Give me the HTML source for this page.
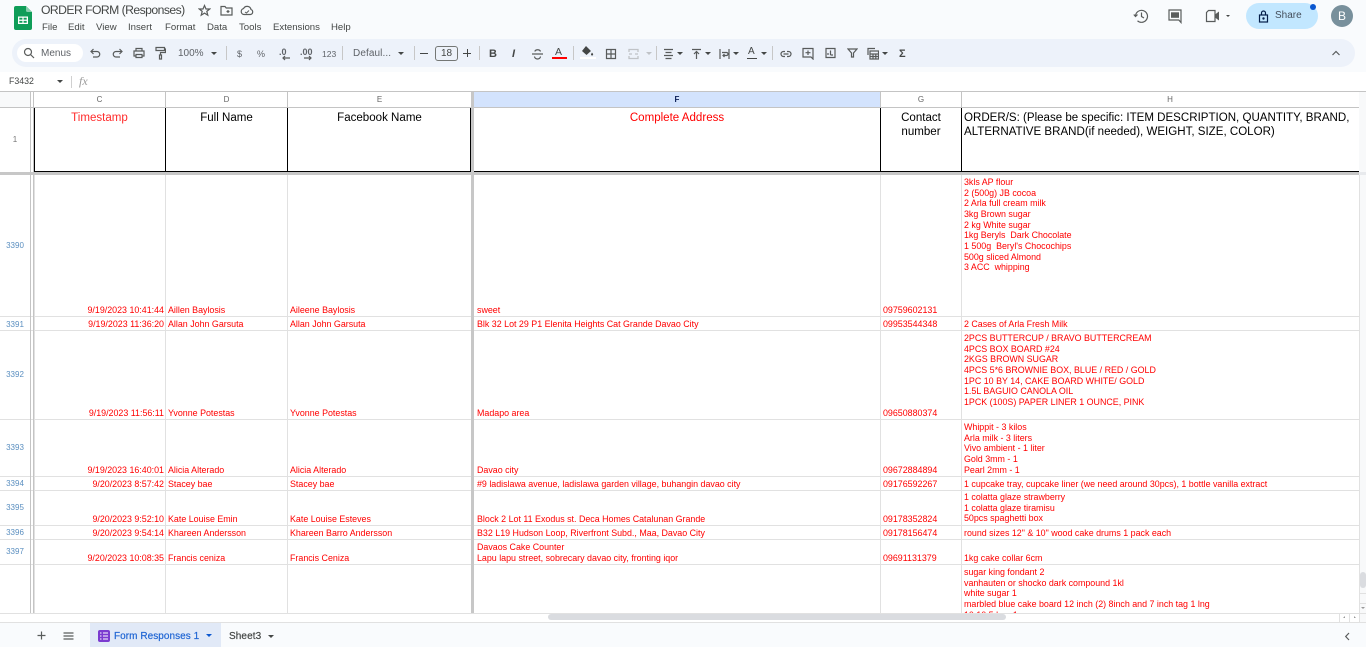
<!DOCTYPE html>
<html><head><meta charset="utf-8"><title>ORDER FORM (Responses)</title>
<style>
html,body{margin:0;padding:0;width:1366px;height:647px;overflow:hidden;background:#fff;font-family:"Liberation Sans",sans-serif}
#p{position:absolute;left:0;top:0;width:1366px;height:647px;overflow:hidden}
#p div,#p span.a,#p svg{position:absolute}
.m{font-size:9.6px;color:#444746;top:21px;line-height:13px;white-space:nowrap}
.tb{font-size:10px;color:#444746;top:48px;line-height:12px;white-space:nowrap}
.sep{width:1px;height:14px;top:46px;background:#c7c7c7}
.ar{width:0;height:0;border-left:3px solid transparent;border-right:3px solid transparent;border-top:3px solid #444746;top:52px}
.i{fill:none;stroke:#444746;stroke-width:1.2;opacity:.88}
.vl{width:1px;background:#e1e1e1;top:175px;height:438px}
.hl{height:1px;background:#e1e1e1;left:0;width:1359px}
.col{font-size:8px;color:#666;top:95px;line-height:9px;text-align:center}
.rn{font-size:8px;color:#5b8fc0;left:0;width:30px;text-align:center;line-height:9px}
.t{font-size:8.9px;color:#ff0000;line-height:11px;white-space:nowrap}
.r{text-align:right;left:34px;width:130px}
.d{left:168px}.e{left:290px}.f{left:477px}.g{left:883px}.h{left:964px}
.ml{line-height:10.65px}
.hd{font-size:11.55px;line-height:14px;top:111px;text-align:center;color:#000}
.bk{background:#000}
</style></head><body><div id="p">

<!-- top chrome -->
<div style="left:0;top:0;width:1366px;height:72px;background:#f9fbfd"></div>
<svg style="left:14px;top:6px" width="18" height="24" viewBox="0 0 18 24"><path d="M2 0H12L18 6V22a2 2 0 0 1-2 2H2a2 2 0 0 1-2-2V2A2 2 0 0 1 2 0Z" fill="#0f9d58"/><path d="M12 0L18 6H13.5A1.5 1.5 0 0 1 12 4.5Z" fill="#87ceac"/><path d="M4 10.500H14V18H4ZM5.300 11.800V13.600H8.400V11.800ZM9.600 11.800V13.600H12.700V11.800ZM5.300 14.900V16.700H8.400V14.900ZM9.600 14.900V16.700H12.700V14.900Z" fill="#fff" fill-rule="evenodd"/></svg>
<div style="left:41px;top:2px;font-size:12.2px;line-height:16px;color:#444746;white-space:nowrap;letter-spacing:-.55px">ORDER FORM (Responses)</div>
<svg class="i" style="left:198px;top:4px" width="13" height="13" viewBox="0 0 13 13"><path d="M6.500 1.500L8 5H11.700L8.800 7.400 9.800 11.200 6.500 9.100 3.200 11.200 4.200 7.400 1.300 5H5Z"/></svg>
<svg class="i" style="left:220px;top:4px" width="13" height="13" viewBox="0 0 13 13"><path d="M1 2.500H5L6.200 4H12V11H1Z"/><path d="M6.500 7.500H9.500M8 6V9"/></svg>
<svg class="i" style="left:240px;top:4px" width="14" height="13" viewBox="0 0 14 13"><path d="M4 10.500A3 3 0 0 1 3.500 4.600 4 4 0 0 1 11 5.500 2.600 2.600 0 0 1 10.500 10.500Z"/><path d="M5 8L6.500 9 9 6.500" stroke-width="1"/></svg>
<div class="m" style="left:42px">File</div><div class="m" style="left:68px">Edit</div><div class="m" style="left:96px">View</div><div class="m" style="left:128px">Insert</div><div class="m" style="left:165px">Format</div><div class="m" style="left:207px">Data</div><div class="m" style="left:239px">Tools</div><div class="m" style="left:273px">Extensions</div><div class="m" style="left:331px">Help</div>

<!-- right top -->
<svg class="i" style="left:1133px;top:8px" width="16" height="16" viewBox="0 0 16 16" stroke-width="1.500"><path d="M2.500 8A6 6 0 1 1 4.500 12.800"/><path d="M.8 6.500L2.500 8.500 4.500 6.600"/><path d="M8.500 4.500V8.500L11 10"/></svg>
<svg class="i" style="left:1167px;top:8px" width="16" height="16" viewBox="0 0 16 16" stroke-width="1.500"><path d="M2 2H14V14.500L11.800 12H2Z"/><path d="M4 4.300H12V9.800H4Z" fill="#444746" stroke="none"/></svg>
<svg class="i" style="left:1205px;top:9px" width="15" height="14" viewBox="0 0 15 14" stroke-width="1.500"><path d="M3.500 1.500H10V12.500H1.500V3.500Z"/><path d="M10 5.500L14 2.500V11.500L10 8.500Z" fill="#444746" stroke="none"/></svg>
<div class="ar" style="left:1226px;top:15px;border-width:2px 2px 0 2px"></div>
<div style="left:1246px;top:3px;width:72px;height:26px;border-radius:13px;background:#c2e7ff"></div>
<svg style="left:1258px;top:10px" width="11" height="13" viewBox="0 0 11 13" fill="none" stroke="#041e49" stroke-width="1.200"><rect x="1.500" y="5" width="8" height="7"/><path d="M3.500 5V3a2 2 0 0 1 4 0V5"/><circle cx="5.500" cy="8.500" r=".6"/></svg>
<div style="left:1275px;top:10px;font-size:10px;line-height:12px;color:#444f5c">Share</div>
<div style="left:1310px;top:4px;width:6px;height:6px;border-radius:50%;background:#0b57d0"></div>
<div style="left:1331px;top:5px;width:22px;height:22px;border-radius:50%;background:#78909c;color:#fff;font-size:12px;line-height:22px;text-align:center">B</div>

<!-- toolbar -->
<div style="left:12px;top:39px;width:1343px;height:28px;border-radius:14px;background:#edf2fa"></div>
<div style="left:17px;top:44px;width:66px;height:18px;border-radius:9px;background:#fff"></div>
<svg class="i" style="left:23px;top:47px" width="12" height="12" viewBox="0 0 12 12"><circle cx="5" cy="5" r="3.500"/><path d="M7.500 7.500L11 11"/></svg>
<div class="tb" style="left:41px;color:#5f6368">Menus</div>
<svg class="i" style="left:90px;top:48px" width="11" height="11" viewBox="0 0 11 11"><path d="M1 3.500H7A2.700 2.700 0 0 1 7 9H3"/><path d="M3.500 1L1 3.500 3.500 6"/></svg>
<svg class="i" style="left:112px;top:48px" width="11" height="11" viewBox="0 0 11 11"><path d="M10 3.500H4A2.700 2.700 0 0 0 4 9H8"/><path d="M7.500 1L10 3.500 7.500 6"/></svg>
<svg class="i" style="left:133px;top:47px" width="12" height="12" viewBox="0 0 12 12"><path d="M3 4V1.500H9V4M3 9H1V4H11V9H9"/><path d="M3 7.500H9V10.500H3Z"/></svg>
<svg class="i" style="left:155px;top:46px" width="11" height="14" viewBox="0 0 11 14"><path d="M1 1.500H9.500V4.500H1ZM9.500 3H10.500V6.500H5.500V9"/><path d="M4.500 9H6.500V13H4.500Z"/></svg>
<div class="tb" style="left:178px;color:#5f6368">100%</div><div class="ar" style="left:211px"></div>
<div class="sep" style="left:226px"></div>
<div class="tb" style="left:237px;font-size:9px;color:#5f6368">$</div><div class="tb" style="left:257px;font-size:9px;color:#5f6368">%</div>
<div class="tb" style="left:279px;font-size:9px;font-weight:bold;top:46px;color:#5f6368">.0</div>
<svg class="i" style="left:281px;top:55px" width="10" height="6" viewBox="0 0 10 6"><path d="M9 3H2M4 1L2 3 4 5"/></svg>
<div class="tb" style="left:300px;font-size:9px;font-weight:bold;top:46px;color:#5f6368">.00</div>
<svg class="i" style="left:303px;top:55px" width="10" height="6" viewBox="0 0 10 6"><path d="M1 3H8M6 1L8 3 6 5"/></svg>
<div class="tb" style="left:322px;font-size:8.500px;color:#5f6368">123</div>
<div class="sep" style="left:342px"></div>
<div class="tb" style="left:353px;letter-spacing:.1px;color:#5f6368">Defaul...</div><div class="ar" style="left:398px"></div>
<div class="sep" style="left:414px"></div>
<div style="left:420px;top:53px;width:8px;height:1px;background:#444746"></div>
<div style="left:435px;top:46px;width:21px;height:13px;border:1px solid #747775;border-radius:3px;font-size:10px;line-height:13px;text-align:center;color:#444746">18</div>
<div style="left:463px;top:53px;width:8px;height:1px;background:#444746"></div><div style="left:467px;top:49px;width:1px;height:8px;background:#444746"></div>
<div class="sep" style="left:479px"></div>
<div class="tb" style="left:489px;font-weight:bold;font-size:11px">B</div>
<div class="tb" style="left:512px;font-style:italic;font-weight:bold;font-size:11px">I</div>
<svg class="i" style="left:532px;top:48px" width="11" height="12" viewBox="0 0 11 12"><path d="M0 6H11M8.500 3.500A3 2.500 0 0 0 2.800 3.500M2.500 8.500A3 2.500 0 0 0 8.500 8.500"/></svg>
<div class="tb" style="left:555px;font-size:10.500px;top:46px">A</div>
<div style="left:552px;top:57px;width:15px;height:2px;background:#f00"></div>
<div class="sep" style="left:573px"></div>
<svg style="left:581px;top:46px" width="13" height="10" viewBox="0 0 13 10" fill="#444746"><path d="M5 0L10 5 5.500 9 1 5ZM11 6.500C11.800 7.800 12.500 8 12 9 11.500 10 10 9.500 10 8.500 10 8 10.500 7.500 11 6.500Z"/></svg>
<div style="left:580px;top:57px;width:16px;height:2px;background:#fff"></div>
<svg class="i" style="left:605px;top:48px" width="12" height="12" viewBox="0 0 12 12"><path d="M1.500 1.500H10.500V10.500H1.500ZM6 1.500V10.500M1.500 6H10.500"/></svg>
<svg style="left:628px;top:48px" width="11" height="12" viewBox="0 0 11 12" fill="none" stroke="#c0c3c7" stroke-width="1.300"><path d="M1 4V1.500H10V4M1 8V10.500H10V8M1 6H4M10 6H7"/></svg>
<div class="ar" style="left:646px;border-top-color:#c0c3c7"></div>
<div class="sep" style="left:656px"></div>
<svg class="i" style="left:663px;top:48px" width="11" height="12" viewBox="0 0 11 12"><path d="M1 1.500H10M2.500 4.500H8.500M1 7.500H10M2.500 10.500H8.500"/></svg>
<div class="ar" style="left:677px"></div>
<svg class="i" style="left:691px;top:48px" width="11" height="12" viewBox="0 0 11 12"><path d="M1 1.500H10M5.500 11V4M3 6L5.500 3.500 8 6"/></svg>
<div class="ar" style="left:705px"></div>
<svg class="i" style="left:719px;top:48px" width="11" height="12" viewBox="0 0 11 12"><path d="M1 1V11M10 1V11M3 4.500H7.500A1.500 1.500 0 0 1 7.500 7.500H4M5.500 6L4 7.500 5.500 9"/></svg>
<div class="ar" style="left:733px"></div>
<div class="tb" style="left:748px;font-size:10px;top:46px">A</div><div style="left:747px;top:58px;width:10px;height:1px;background:#444746"></div>
<div class="ar" style="left:761px"></div>
<div class="sep" style="left:772px"></div>
<svg class="i" style="left:780px;top:50px" width="12" height="8" viewBox="0 0 12 8"><path d="M5 1.500H3.500a2.500 2.500 0 0 0 0 5H5M7 1.500H8.500a2.500 2.500 0 0 1 0 5H7M3.500 4H8.500"/></svg>
<svg class="i" style="left:802px;top:47px" width="12" height="13" viewBox="0 0 12 13"><path d="M1 1.500H11V12L9 10H1Z"/><path d="M3.500 5.700H8.500M6 3.500V8"/></svg>
<svg class="i" style="left:825px;top:47px" width="11" height="12" viewBox="0 0 11 12"><path d="M1 1.500H10V10.500H1ZM3 8V6M5.500 8V3.500M8 8H5.500"/></svg>
<svg class="i" style="left:847px;top:48px" width="11" height="10" viewBox="0 0 11 10"><path d="M1 1H10L6.500 5V9H4.500V5Z"/></svg>
<svg class="i" style="left:867px;top:47px" width="12" height="13" viewBox="0 0 12 13"><path d="M1 8V1.500H8"/><path d="M3 4H11.500V12H3ZM3 7H11.500M3 9.500H11.500M6 7V12M8.800 7V12"/></svg>
<div class="ar" style="left:882px"></div>
<div class="tb" style="left:899px;font-weight:bold;font-size:11px;top:48px">Σ</div>
<svg class="i" style="left:1331px;top:50px" width="10" height="6" viewBox="0 0 10 6"><path d="M1.500 5L5 1.500 8.500 5"/></svg>

<!-- formula bar -->
<div class="tb" style="left:9px;top:75px;font-size:8.800px">F3432</div>
<div class="ar" style="left:57px;top:80px"></div>
<div style="left:71px;top:76px;width:1px;height:12px;background:#d0d0d0"></div>
<div style="left:79px;top:75px;font:italic 12px/13px 'Liberation Serif',serif;color:#9a9a9a">fx</div>

<!-- grid header -->
<div style="left:1359px;top:92px;width:7px;height:530px;background:#f8f9fa"></div>
<div style="left:0;top:91px;width:1366px;height:1px;background:#c4c4c4"></div>
<div style="left:0;top:92px;width:30px;height:15px;background:#f8f9fa"></div>
<div style="left:474px;top:92px;width:406px;height:15px;background:#d3e3fd"></div>
<div style="left:0;top:107px;width:1359px;height:1px;background:#c4c4c4"></div>
<div class="col" style="left:34px;width:131px">C</div>
<div class="col" style="left:166px;width:121px">D</div>
<div class="col" style="left:288px;width:183px">E</div>
<div class="col" style="left:474px;width:406px;color:#0b1f57;font-weight:bold">F</div>
<div class="col" style="left:881px;width:80px">G</div>
<div class="col" style="left:962px;width:416px">H</div>
<div style="left:165px;top:92px;width:1px;height:15px;background:#c4c4c4"></div>
<div style="left:287px;top:92px;width:1px;height:15px;background:#c4c4c4"></div>
<div style="left:880px;top:92px;width:1px;height:15px;background:#c4c4c4"></div>
<div style="left:961px;top:92px;width:1px;height:15px;background:#c4c4c4"></div>

<!-- row 1 -->
<div class="rn" style="top:135px;color:#777">1</div>
<div class="hd" style="left:34px;width:131px;color:#ff2b2b">Timestamp</div>
<div class="hd" style="left:166px;width:121px">Full Name</div>
<div class="hd" style="left:288px;width:183px">Facebook Name</div>
<div class="hd" style="left:474px;width:406px;color:#f00">Complete Address</div>
<div class="hd" style="left:881px;width:80px">Contact<br>number</div>
<div class="hd" style="left:964px;width:395px;text-align:left;white-space:nowrap">ORDER/S: (Please be specific: ITEM DESCRIPTION, QUANTITY, BRAND,<br>ALTERNATIVE BRAND(if needed), WEIGHT, SIZE, COLOR)</div>

<!-- data grid lines -->
<div class="vl" style="left:34px"></div><div class="vl" style="left:165px"></div><div class="vl" style="left:287px"></div><div class="vl" style="left:880px"></div><div class="vl" style="left:961px"></div><div class="vl" style="left:1359px"></div>
<div class="hl" style="top:316px"></div><div class="hl" style="top:330px"></div><div class="hl" style="top:419px"></div><div class="hl" style="top:476px"></div><div class="hl" style="top:490px"></div><div class="hl" style="top:525px"></div><div class="hl" style="top:539px"></div><div class="hl" style="top:564px"></div>

<!-- black borders -->
<div class="bk" style="left:34px;top:171px;width:1325px;height:1px"></div>
<div class="bk" style="left:34px;top:108px;width:1px;height:64px"></div>
<div class="bk" style="left:165px;top:108px;width:1px;height:64px"></div>
<div class="bk" style="left:287px;top:108px;width:1px;height:64px"></div>
<div class="bk" style="left:470px;top:108px;width:1px;height:64px"></div>
<div class="bk" style="left:880px;top:108px;width:1px;height:64px"></div>
<div class="bk" style="left:961px;top:108px;width:1px;height:64px"></div>

<!-- freeze bars -->
<div style="left:0;top:172px;width:1359px;height:3px;background:#c7c7c7"></div>
<div style="left:1359px;top:172px;width:7px;height:3px;background:#e8eaed"></div>
<div style="left:471px;top:92px;width:3px;height:521px;background:#c7c7c7"></div>
<div style="left:30px;top:92px;width:1px;height:521px;background:#c4c4c4"></div>
<div style="left:33px;top:92px;width:1px;height:521px;background:#c4c4c4"></div>

<!-- rows -->
<div class="rn" style="top:241px">3390</div>
<div class="t r" style="top:305px">9/19/2023 10:41:44</div><div class="t d" style="top:305px">Aillen Baylosis</div><div class="t e" style="top:305px">Aileene Baylosis</div><div class="t f" style="top:305px">sweet</div><div class="t g" style="top:305px">09759602131</div>
<div class="t h ml" style="top:177px">3kls AP flour<br>2 (500g) JB cocoa<br>2 Arla full cream milk<br>3kg Brown sugar<br>2 kg White sugar<br>1kg Beryls&nbsp; Dark Chocolate<br>1 500g&nbsp; Beryl's Chocochips<br>500g sliced Almond<br>3 ACC&nbsp; whipping</div>

<div class="rn" style="top:320px">3391</div>
<div class="t r" style="top:319px">9/19/2023 11:36:20</div><div class="t d" style="top:319px">Allan John Garsuta</div><div class="t e" style="top:319px">Allan John Garsuta</div><div class="t f" style="top:319px">Blk 32 Lot 29 P1 Elenita Heights Cat Grande Davao City</div><div class="t g" style="top:319px">09953544348</div><div class="t h" style="top:319px">2 Cases of Arla Fresh Milk</div>

<div class="rn" style="top:370px">3392</div>
<div class="t r" style="top:408px">9/19/2023 11:56:11</div><div class="t d" style="top:408px">Yvonne Potestas</div><div class="t e" style="top:408px">Yvonne Potestas</div><div class="t f" style="top:408px">Madapo area</div><div class="t g" style="top:408px">09650880374</div>
<div class="t h ml" style="top:333px">2PCS BUTTERCUP / BRAVO BUTTERCREAM<br>4PCS BOX BOARD #24<br>2KGS BROWN SUGAR<br>4PCS 5*6 BROWNIE BOX, BLUE / RED / GOLD<br>1PC 10 BY 14, CAKE BOARD WHITE/ GOLD<br>1.5L BAGUIO CANOLA OIL<br>1PCK (100S) PAPER LINER 1 OUNCE, PINK</div>

<div class="rn" style="top:443px">3393</div>
<div class="t r" style="top:465px">9/19/2023 16:40:01</div><div class="t d" style="top:465px">Alicia Alterado</div><div class="t e" style="top:465px">Alicia Alterado</div><div class="t f" style="top:465px">Davao city</div><div class="t g" style="top:465px">09672884894</div>
<div class="t h ml" style="top:422px">Whippit - 3 kilos<br>Arla milk - 3 liters<br>Vivo ambient - 1 liter<br>Gold 3mm - 1<br>Pearl 2mm - 1</div>

<div class="rn" style="top:479px">3394</div>
<div class="t r" style="top:479px">9/20/2023 8:57:42</div><div class="t d" style="top:479px">Stacey bae</div><div class="t e" style="top:479px">Stacey bae</div><div class="t f" style="top:479px">#9 ladislawa avenue, ladislawa garden village, buhangin davao city</div><div class="t g" style="top:479px">09176592267</div><div class="t h" style="top:479px">1 cupcake tray, cupcake liner (we need around 30pcs), 1 bottle vanilla extract</div>

<div class="rn" style="top:503px">3395</div>
<div class="t r" style="top:514px">9/20/2023 9:52:10</div><div class="t d" style="top:514px">Kate Louise Emin</div><div class="t e" style="top:514px">Kate Louise Esteves</div><div class="t f" style="top:514px">Block 2 Lot 11 Exodus st. Deca Homes Catalunan Grande</div><div class="t g" style="top:514px">09178352824</div>
<div class="t h ml" style="top:492px">1 colatta glaze strawberry<br>1 colatta glaze tiramisu<br>50pcs spaghetti box</div>

<div class="rn" style="top:528px">3396</div>
<div class="t r" style="top:528px">9/20/2023 9:54:14</div><div class="t d" style="top:528px">Khareen Andersson</div><div class="t e" style="top:528px">Khareen Barro Andersson</div><div class="t f" style="top:528px">B32 L19 Hudson Loop, Riverfront Subd., Maa, Davao City</div><div class="t g" style="top:528px">09178156474</div><div class="t h" style="top:528px">round sizes 12" &amp; 10" wood cake drums 1 pack each</div>

<div class="rn" style="top:547px">3397</div>
<div class="t r" style="top:553px">9/20/2023 10:08:35</div><div class="t d" style="top:553px">Francis ceniza</div><div class="t e" style="top:553px">Francis Ceniza</div><div class="t f ml" style="top:542px">Davaos Cake Counter<br>Lapu lapu street, sobrecary davao city, fronting iqor</div><div class="t g" style="top:553px">09691131379</div><div class="t h" style="top:553px">1kg cake collar 6cm</div>

<div class="t h ml" style="top:567px;height:46px;overflow:hidden">sugar king fondant 2<br>vanhauten or shocko dark compound 1kl<br>white sugar 1<br>marbled blue cake board 12 inch (2) 8inch and 7 inch tag 1 lng<br>10 10 5 box 1</div>

<!-- scrollbars -->
<div style="left:1360px;top:572px;width:6px;height:16px;background:#dadce0;border-radius:3px"></div>
<div style="left:1360px;top:593px;width:6px;height:1px;background:#e1e1e1"></div>
<div style="left:1360px;top:603px;width:6px;height:1px;background:#e1e1e1"></div>
<div class="ar" style="left:1361px;top:597px;border-width:0 2px 2px 2px;border-color:transparent transparent #999"></div>
<div class="ar" style="left:1361px;top:607px;border-width:2px 2px 0 2px;border-top-color:#999"></div>
<div style="left:0;top:613px;width:1366px;height:1px;background:#e1e1e1"></div>
<div style="left:548px;top:614px;width:458px;height:6px;background:#dadce0;border-radius:3px"></div>
<div style="left:1339px;top:614px;width:1px;height:8px;background:#e1e1e1"></div>
<div style="left:1349px;top:614px;width:1px;height:8px;background:#e1e1e1"></div>
<div style="left:1359px;top:614px;width:1px;height:8px;background:#e1e1e1"></div>
<div class="ar" style="left:1343px;top:616px;border-width:2px 2px 2px 0;border-color:transparent #999 transparent transparent"></div>
<div class="ar" style="left:1354px;top:616px;border-width:2px 0 2px 2px;border-color:transparent transparent transparent #999"></div>

<!-- tab bar -->
<div style="left:0;top:622px;width:1366px;height:25px;background:#f9fbfd;border-top:1px solid #e1e1e1;box-sizing:border-box"></div>
<svg class="i" style="left:37px;top:631px" width="9" height="9" viewBox="0 0 9 9"><path d="M.5 4.500H8.500M4.500 .5V8.500"/></svg>
<svg class="i" style="left:63px;top:632px" width="11" height="8" viewBox="0 0 11 8"><path d="M.5 1H10.500M.5 4H10.500M.5 7H10.500"/></svg>
<div style="left:90px;top:623px;width:131px;height:24px;background:#e1e9f7"></div>
<div style="left:98px;top:630px;width:12px;height:12px;border-radius:2px;background:#7b3bd0"></div>
<svg style="left:100px;top:632px" width="8" height="8" viewBox="0 0 8 8" fill="none" stroke="#fff" stroke-width="1"><path d="M0 1H1.500M3 1H8M0 4H1.500M3 4H8M0 7H1.500M3 7H8"/></svg>
<div style="left:114px;top:631px;font-size:10px;line-height:12px;color:#0b57d0;letter-spacing:.05px;-webkit-text-stroke:.2px #0b57d0;white-space:nowrap;opacity:.9">Form Responses 1</div>
<div class="ar" style="left:206px;top:634px;border-top-color:#0b57d0"></div>
<div style="left:229px;top:631px;font-size:10px;line-height:12px;color:#444746;letter-spacing:.1px;-webkit-text-stroke:.2px #444746;white-space:nowrap">Sheet3</div>
<div class="ar" style="left:268px;top:635px"></div>
<svg class="i" style="left:1344px;top:632px" width="7" height="9" viewBox="0 0 7 9" stroke-width="1.500"><path d="M5 1L1.700 4.500 5 8"/></svg>
</div></body></html>
